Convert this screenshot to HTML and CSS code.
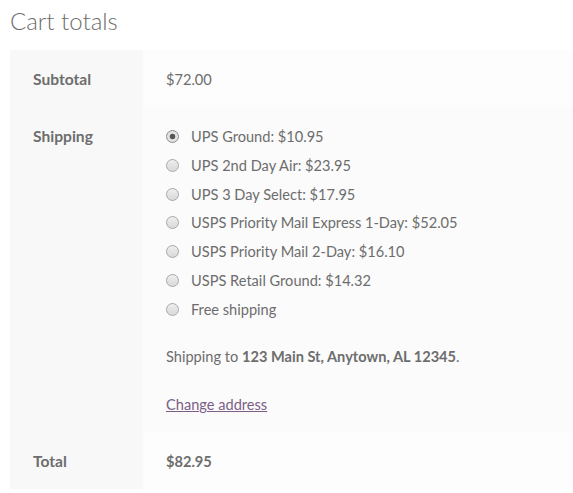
FILE: index.html
```html
<!DOCTYPE html>
<html>
<head>
<meta charset="utf-8">
<link rel="stylesheet" href="styles.css">
</head>
<body>
<div class="cart-totals">
  <h2 class="title">Cart totals</h2>
  <table class="totals">
    <tr class="row-a">
      <th>Subtotal</th>
      <td>$72.00</td>
    </tr>
    <tr class="row-b">
      <th>Shipping</th>
      <td>
        <ul class="methods">
          <li><input type="radio" name="m" checked><label>UPS Ground: $10.95</label></li>
          <li><input type="radio" name="m"><label>UPS 2nd Day Air: $23.95</label></li>
          <li><input type="radio" name="m"><label>UPS 3 Day Select: $17.95</label></li>
          <li><input type="radio" name="m"><label>USPS Priority Mail Express 1-Day: $52.05</label></li>
          <li><input type="radio" name="m"><label>USPS Priority Mail 2-Day: $16.10</label></li>
          <li><input type="radio" name="m"><label>USPS Retail Ground: $14.32</label></li>
          <li><input type="radio" name="m"><label>Free shipping</label></li>
        </ul>
        <p class="destination">Shipping to <strong>123 Main St, Anytown, AL 12345</strong>.</p>
        <p class="calc"><a href="#" class="change">Change address</a></p>
      </td>
    </tr>
    <tr class="row-a">
      <th>Total</th>
      <td><strong>$82.95</strong></td>
    </tr>
  </table>
</div>
</body>
</html>
```
FILE: styles.css
```css
html, body {
  margin: 0;
  padding: 0;
  background: #ffffff;
}
body {
  font-family: "Lato", "Liberation Sans", sans-serif;
  font-size: 14.6px;
  line-height: 25px;
  color: #6d6d6d;
}
.cart-totals {
  padding-left: 10px;
}
.title {
  margin: 0;
  padding-top: 4px;
  height: 46px;
  font-size: 24px;
  line-height: 34px;
  font-weight: 300;
  color: #6d6d6d;
}
.totals {
  width: 563px;
  border-collapse: collapse;
  border-spacing: 0;
}
.totals th, .totals td {
  padding: 17px 0 15px 23px;
  vertical-align: top;
  text-align: left;
}
.totals th {
  width: 110px;
  background: #f8f8f8;
  font-size: 15.6px;
  font-weight: 700;
}
.row-a td {
  background: #fdfdfd;
}
.row-b td {
  background: #fbfbfb;
}
.totals strong {
  font-weight: 700;
}
.methods {
  list-style: none;
  margin: 0 0 22.5px 0;
  padding: 0;
}
.methods li {
  display: flex;
  align-items: center;
  height: 25px;
  margin-bottom: 3.83px;
}
.methods li:last-child {
  margin-bottom: 0;
}
.methods input {
  appearance: none;
  -webkit-appearance: none;
  box-sizing: border-box;
  width: 13px;
  height: 13px;
  margin: 0 12px 0 0;
  border: 1px solid #a9a9a9;
  border-radius: 50%;
  background: linear-gradient(#eeeeee, #d9d9d9);
  flex: none;
}
.methods input:checked {
  background: radial-gradient(circle, #555555 0, #555555 2.4px, #e4e4e4 3.2px, #dcdcdc 100%);
  border-color: #8f8f8f;
}
.destination {
  margin: 0 0 23px 0;
}
.calc {
  margin: 0;
}
.change {
  color: #7b5d86;
  text-decoration: underline;
}
```
